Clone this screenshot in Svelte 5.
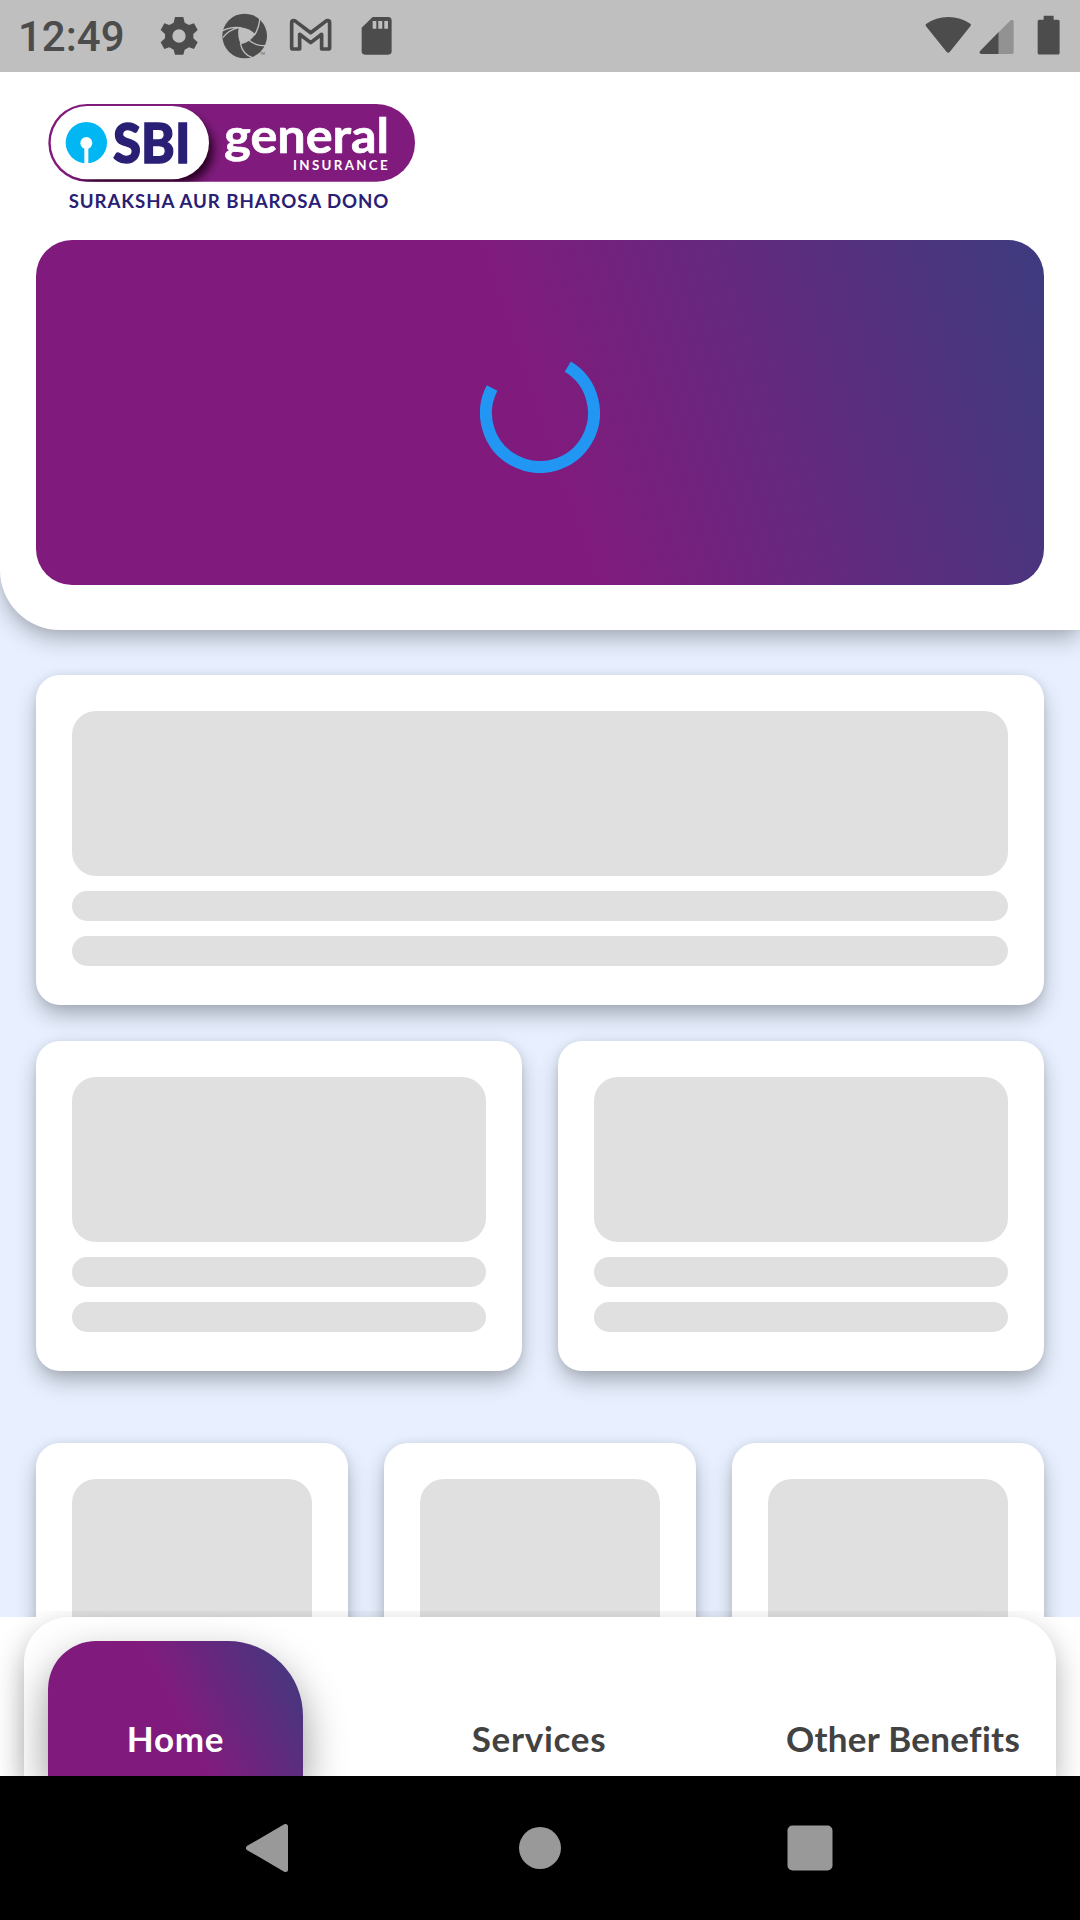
<script>
  const rows = [1, 2, 3];
</script>

<div class="screen">
  <header class="status">
    <span class="time">12:49</span>
    <svg class="gear" viewBox="480 48 114 120"><path fill-rule="evenodd" d="M525 51h25l4 17 13 7 15-5 11 20-13 12v13l13 12-11 20-15-5-13 7-4 15h-25l-4-15-13-7-15 5-11-20 13-12v-13l-13-12 11-20 15 5 13-7zM537 88a20 20 0 1 0 0 40 20 20 0 0 0 0-40z" /></svg>
    <svg class="aperture" viewBox="666 40 138 138">
      <circle cx="734" cy="109" r="67" />
      <path class="hole" d="M716 84Q741 80 766 103Q752 127 722 134Q711 108 716 84Z" />
      <path class="slit" d="M667 94Q690 80 724 84M780 53Q778 83 763 107M797 137Q772 142 746 121M756 173Q728 164 721 131M669 114Q685 91 716 84" />
      <text x="781" y="165" font-size="9">TM</text>
    </svg>
    <svg class="mail" viewBox="868 54 130 102"><path d="M881 147H880Q876 147 876 143V69Q876 62 882 62Q885 62 888 64L933 98L978 64Q981 62 984 62Q990 62 990 69V143Q990 147 986 147H966V103L933 128L900 103V147Z" /></svg>
    <svg class="sd" viewBox="1084 48 94 118"><path d="M1119 51H1166Q1176 51 1176 62V154Q1176 164 1166 164H1096Q1086 164 1086 154V83Z" /><path class="hole" d="M1119 63h11v23h-11zM1136 63h12v23h-12zM1154 63h11v23h-11z" /></svg>
    <div class="system">
      <svg class="wifi" viewBox="76 48 140 114"><path d="M79 72Q109 51 146 51T213 72Q215 75 212 79L150 156Q146 161 141 156L79 79Q76 75 79 72Z" /></svg>
      <svg class="signal" viewBox="238 57 106 108"><path class="faint" d="M297 97L333 61Q342 57 342 65V157Q342 162 337 162H297Z" /><path d="M297 96V162H244Q237 159 242 152Z" /></svg>
      <svg class="battery" viewBox="412 46 70 121"><path d="M432 48h30v12h13q5 0 5 5v95q0 5-5 5h-56q-5 0-5-5V65q0-5 5-5h13z" /></svg>
    </div>
  </header>

  <main>
    <section class="hero">
      <svg class="logo" viewBox="0 0 1200 390" role="img" aria-label="SBI General Insurance">
        <defs>
          <filter id="soft" x="-20%" y="-30%" width="140%" height="160%"><feGaussianBlur stdDeviation="15" /></filter>
          <clipPath id="pill"><rect x="55" y="42" width="1100" height="233" rx="116" /></clipPath>
        </defs>
        <rect x="55" y="42" width="1100" height="233" rx="116" fill="#801b7d" />
        <g clip-path="url(#pill)"><rect x="110" y="76" width="440" height="206" rx="103" fill="#250024" filter="url(#soft)" /></g>
        <rect x="62" y="48" width="475" height="220" rx="110" fill="#fff" />
        <circle cx="169" cy="158" r="62" fill="#00b7f4" />
        <circle cx="169" cy="159" r="18" fill="#fff" /><rect x="163" y="165" width="12" height="58" fill="#fff" />
        <text class="lato heavy" x="249" y="218" font-size="167" textLength="232" lengthAdjust="spacingAndGlyphs" fill="#292075" stroke="#292075" stroke-width="4">SBI</text>
        <text class="lato bold" x="583" y="188" font-size="146" textLength="494" lengthAdjust="spacingAndGlyphs" fill="#fff" stroke="#fff" stroke-width="2">general</text>
        <text class="lato bold" x="789" y="239" font-size="40" textLength="284" fill="#fff">INSURANCE</text>
        <text class="lato bold" x="116" y="353" font-size="56" textLength="959" fill="#292075">SURAKSHA AUR BHAROSA DONO</text>
      </svg>
      <div class="banner">
        <svg class="spinner" viewBox="-60 -60 120 120"><path d="M27.8-46.3A54 54 0 1 1-47.9-25" /></svg>
      </div>
    </section>

    <div class="skeletons">
      {#each rows as count}
        <div class="row">
          {#each Array(count) as _}
            <div class="card">
              <div class="block"></div>
              <div class="line"></div>
              <div class="line"></div>
            </div>
          {/each}
        </div>
      {/each}
    </div>
  </main>

  <nav class="tabs">
    <div class="panel">
      <div class="tab active"><span>Home</span></div>
      <div class="tab"><span>Services</span></div>
      <div class="tab long"><span>Other Benefits</span></div>
    </div>
  </nav>

  <footer>
    <svg viewBox="0 0 60 60"><path d="M45.500 8.500V51.500L8.500 30Z" stroke="#999" stroke-width="5" stroke-linejoin="round" /></svg>
    <svg viewBox="0 0 60 60"><circle cx="30" cy="30" r="21" /></svg>
    <svg viewBox="0 0 60 60"><rect x="7.500" y="7.500" width="45" height="45" rx="5" /></svg>
  </footer>
</div>

<style>
  :global(body) { margin: 0; background: #000; }
  .screen { width: 1080px; height: 1920px; display: flex; flex-direction: column; overflow: hidden; font-family: Lato, "Open Sans", sans-serif; }
  svg { display: block; flex: none; }

  .status { height: 72px; flex: none; box-sizing: border-box; background: #bfbfbf; display: flex; position: relative; z-index: 2; }
  .status svg { fill: #4c4c4c; }
  .time { width: 142px; padding-left: 18px; font: 500 42px/74px Roboto, sans-serif; color: #4c4c4c; }
  .gear { width: 38px; height: 40px; margin-top: 16px; }
  .aperture { width: 46px; height: 46px; margin: 13.300px 0 0 24px; }
  .mail { width: 43.300px; height: 34px; margin: 18px 0 0 21.300px; }
  .status .mail path { fill: none; stroke: #4c4c4c; stroke-width: 11; stroke-linejoin: round; }
  .sd { width: 31.300px; height: 39.300px; margin: 16px 0 0 28.700px; }
  .status .hole { fill: #bfbfbf; }
  .status .slit { fill: none; stroke: #bfbfbf; stroke-width: 4; }
  .status .faint { fill: #929292; }
  .system { display: flex; margin-left: auto; padding-right: 19.300px; }
  .wifi { width: 46.700px; height: 38px; margin-top: 16px; }
  .signal { width: 35.300px; height: 36px; margin: 19px 0 0 7.300px; }
  .battery { width: 23.300px; height: 40.300px; margin: 15.300px 0 0 22.700px; }

  main { height: 1545px; flex: none; overflow: hidden; background: #e8f0ff; }
  .hero { height: 558px; box-sizing: border-box; padding: 18px 36px 0; background: #fff; border-bottom-left-radius: 60px; box-shadow: 0 11px 22px -2px rgba(0, 0, 0, 0.28), 0 0 9px rgba(0, 0, 0, 0.05); }
  .logo { width: 400px; height: 130px; margin-left: -6px; }
  .lato { font-family: Lato, sans-serif; }
  .bold { font-weight: 700; }
  .heavy { font-weight: 900; }
  .banner { height: 345px; margin-top: 20px; border-radius: 36px; background: linear-gradient(71.1deg, #801b7d 50%, #3d3b7f 100%); display: flex; align-items: center; justify-content: center; }
  .spinner { width: 120px; height: 120px; }
  .spinner path { fill: none; stroke: #2196f3; stroke-width: 12; }

  .skeletons { padding: 45px 36px 0; display: flex; flex-direction: column; gap: 36px; }
  .row { display: flex; gap: 36px; }
  .row:last-child { margin-top: 36px; }
  .card { flex: 1; height: 330px; box-sizing: border-box; padding: 36px; background: #fff; border-radius: 24px; display: flex; flex-direction: column; gap: 15px; box-shadow: 0 11px 22px -2px rgba(0, 0, 0, 0.3), 0 0 9px rgba(0, 0, 0, 0.07); }
  .block { height: 165px; border-radius: 24px; background: #e0e0e0; }
  .line { height: 30px; border-radius: 15px; background: #e0e0e0; }

  .tabs { height: 159px; flex: none; padding: 0 24px; background: #fff; position: relative; clip-path: inset(-6px 0 0); }
  .panel { height: 159px; box-sizing: border-box; padding: 24px 25px 0 24px; display: grid; grid-template-columns: 255px 472px 256px; background: #fff; border-radius: 45px 45px 0 0; box-shadow: 0 12px 30px rgba(0, 0, 0, 0.3); }
  .tab { height: 135px; box-sizing: border-box; padding-top: 74px; text-align: center; white-space: nowrap; color: #424242; font-size: 35px; line-height: 46px; font-weight: 700; letter-spacing: 0.7px; }
  .long { letter-spacing: 0.3px; }
  .active { color: #fff; border-radius: 48px 75px 0 0; background: linear-gradient(62.1deg, #801b7d 50%, #3d3b7f 100%); box-shadow: 0 18px 42px rgba(0, 0, 0, 0.42); }

  footer { height: 144px; flex: none; background: #000; display: flex; align-items: center; justify-content: center; gap: 210px; }
  footer svg { width: 60px; height: 60px; fill: #999; }
</style>
